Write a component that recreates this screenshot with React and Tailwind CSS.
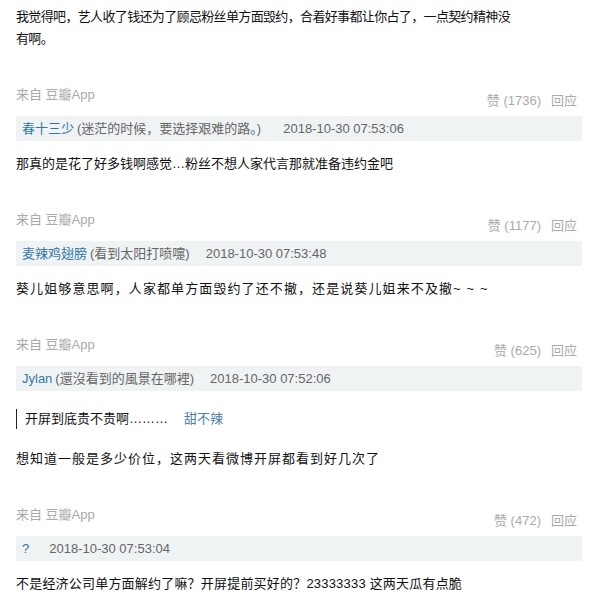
import React from 'react'

const comments = [
  {
    text: (
      <>
        我觉得吧，艺人收了钱还为了顾忌粉丝单方面毁约，合着好事都让你占了，一点契约精神没
        <br />
        有啊。
      </>
    ),
    track: 'tracking-[-0.65px]',
    likes: 1736,
    user: '春十三少',
    sign: '(迷茫的时候，要选择艰难的路。)',
    time: '2018-10-30 07:53:06',
    gap: 'ml-[22px]',
  },
  {
    text: '那真的是花了好多钱啊感觉…粉丝不想人家代言那就准备违约金吧',
    track: '',
    likes: 1177,
    user: '麦辣鸡翅膀',
    sign: '(看到太阳打喷嚏)',
    time: '2018-10-30 07:53:48',
    gap: 'ml-[16px]',
  },
  {
    text: '葵儿姐够意思啊，人家都单方面毁约了还不撤，还是说葵儿姐来不及撤~ ~ ~',
    track: 'tracking-[1.1px]',
    likes: 625,
    user: 'Jylan',
    sign: '(還沒看到的風景在哪裡)',
    time: '2018-10-30 07:52:06',
    gap: 'ml-[16px]',
  },
  {
    quote: { text: '开屏到底贵不贵啊………', author: '甜不辣' },
    text: '想知道一般是多少价位，这两天看微博开屏都看到好几次了',
    track: 'tracking-[1px]',
    likes: 472,
    user: '?',
    sign: '',
    time: '2018-10-30 07:53:04',
    gap: 'ml-[20px]',
  },
]

const Comment = ({ c, first }) => (
  <div>
    {c.quote && (
      <div className="mt-[18px] flex h-[20px] items-center border-l-[1.5px] border-[#222] pl-[8px] text-[13px] leading-[20px]">
        <span className="text-[#111]">{c.quote.text}</span>
        <span className="ml-[16px] text-[#4d7fa3]">{c.quote.author}</span>
      </div>
    )}
    <p
      className={`whitespace-nowrap text-[13px] leading-[22px] text-[#111] ${c.track} ${
        first ? '' : c.quote ? 'mt-[19px]' : 'mt-[12px]'
      }`}
    >
      {c.text}
    </p>
    <div className="mt-[35px] flex items-start justify-between pr-[5px] text-[13px] text-[#aaa]">
      <span className="leading-[20px]">来自 豆瓣App</span>
      <span className="pt-[6px] leading-[20px]">
        赞 ({c.likes})<span className="ml-[10px]">回应</span>
      </span>
    </div>
    <div className="mt-[5px] flex h-[25px] items-center bg-[#eff3f3] pl-[6px] text-[13px] text-[#666]">
      <span className="text-[#37a]">{c.user}</span>
      {c.sign && <span className="ml-[3px]">{c.sign}</span>}
      <span className={c.gap}>{c.time}</span>
    </div>
  </div>
)

export default function App() {
  return (
    <div
      className="h-[596px] w-[593px] overflow-hidden bg-white pl-[16px] pr-[11px] pt-[6px]"
      style={{ fontFamily: '"Liberation Sans", "Noto Sans CJK SC", sans-serif' }}
    >
      {comments.map((c, i) => (
        <Comment key={i} c={c} first={i === 0} />
      ))}
      <p className="mt-[12px] whitespace-nowrap text-[13px] leading-[22px] tracking-[0.2px] text-[#111]">
        不是经济公司单方面解约了嘛？开屏提前买好的？23333333 这两天瓜有点脆
      </p>
    </div>
  )
}
